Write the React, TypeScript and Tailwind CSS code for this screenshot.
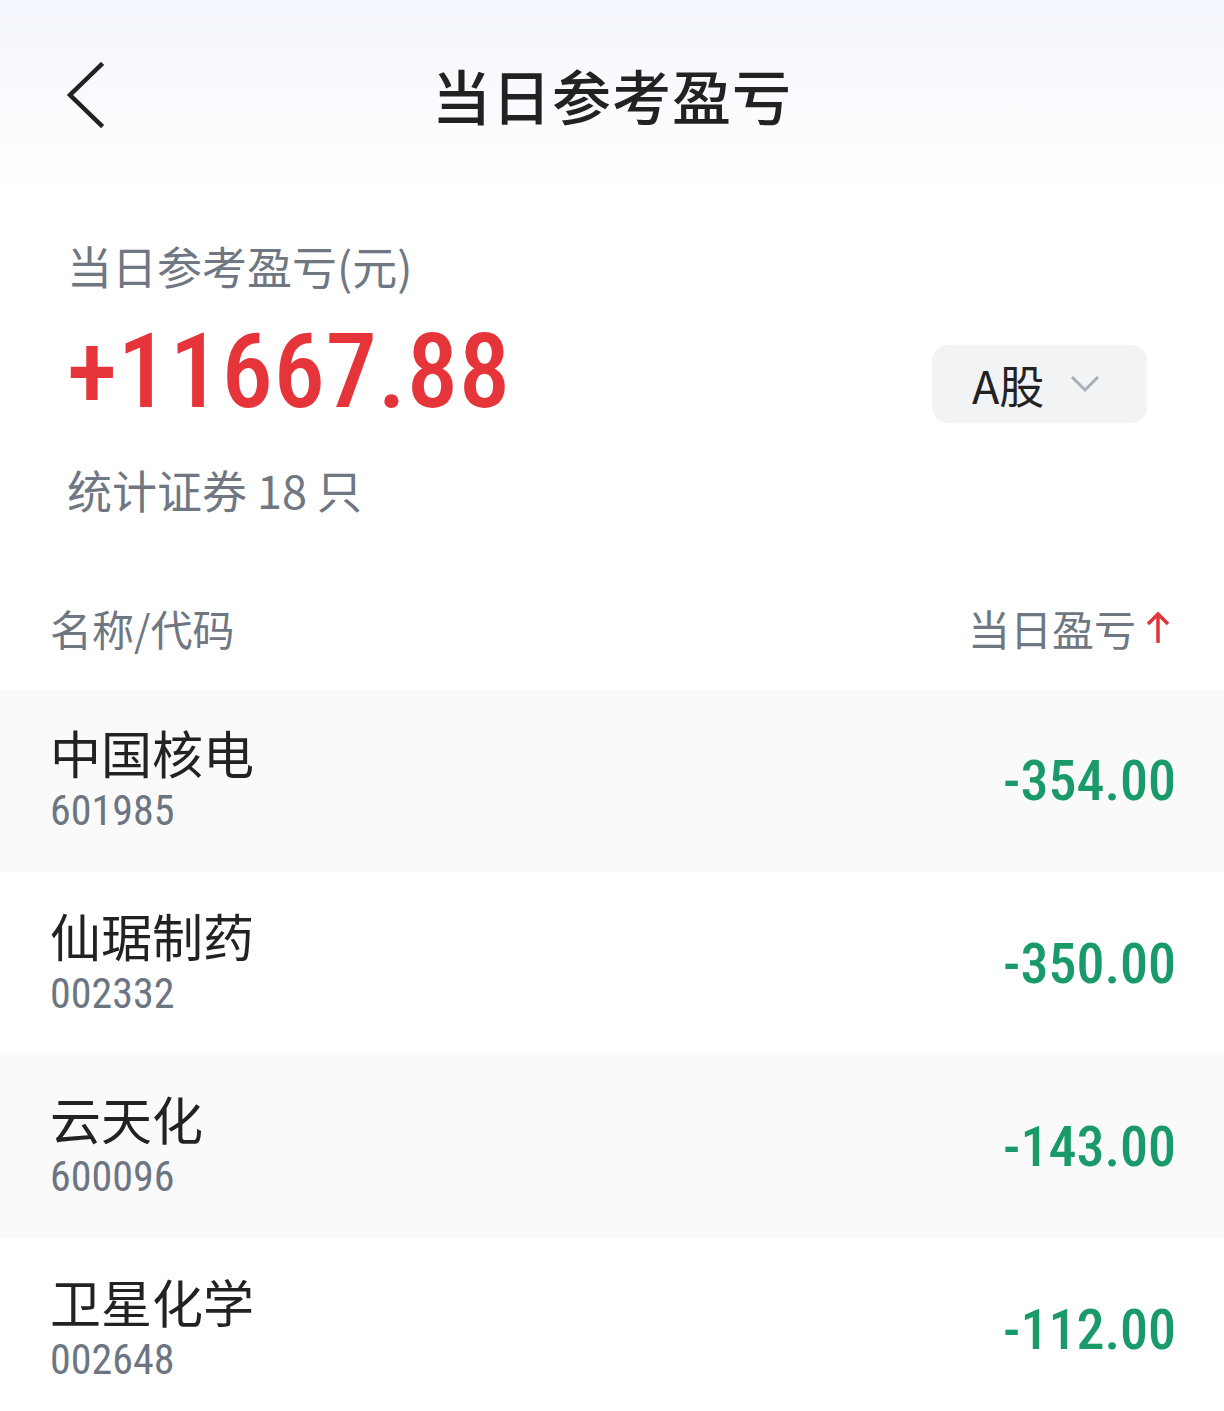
const cjk = { fontFamily: '"Noto Sans CJK SC", "Noto Sans", sans-serif' }
const num = { fontFamily: '"Roboto Condensed", "DejaVu Sans Condensed", Roboto, "Noto Sans CJK SC", sans-serif' }

const rows = [
  { name: "中国核电", code: "601985", pnl: "-354.00" },
  { name: "仙琚制药", code: "002332", pnl: "-350.00" },
  { name: "云天化", code: "600096", pnl: "-143.00" },
  { name: "卫星化学", code: "002648", pnl: "-112.00" },
]

function BackIcon() {
  return (
    <svg width="40" height="66" viewBox="0 0 40 66" fill="none">
      <path d="M35 3 L4 33 L35 63" stroke="#222" strokeWidth="4.5" strokeLinecap="square" />
    </svg>
  )
}

function ChevronDown() {
  return (
    <svg width="30" height="20" viewBox="0 0 30 20" fill="none">
      <path d="M2 3 L15 16 L28 3" stroke="#a7afb8" strokeWidth="3" />
    </svg>
  )
}

function SortUp() {
  return (
    <svg width="24" height="34" viewBox="0 0 24 34" fill="none">
      <path d="M12 4 V33 M2 14 L12 4 L22 14" stroke="#e0353a" strokeWidth="3.5" />
    </svg>
  )
}

export default function App() {
  return (
    <div className="w-[1224px] h-[1411px] overflow-hidden bg-white" style={cjk}>
      {/* header */}
      <div className="h-[192px] pb-[4px] bg-gradient-to-b from-[#f3f6fc] to-white grid grid-cols-[1fr_auto_1fr] items-center px-[66px]">
        <div className="flex items-center pt-[2px]">
          <BackIcon />
        </div>
        <h1 className="text-[59px] leading-none font-medium text-[#222] tracking-[1px]">当日参考盈亏</h1>
        <div />
      </div>

      {/* summary */}
      <div className="pl-[67px] pr-[77px] mt-[44px]">
        <div className="text-[45px] leading-[60px] text-[#6f7782]">当日参考盈亏(元)</div>
        <div className="flex items-end justify-between mt-[24px]">
          <div className="text-[103px] leading-none font-medium text-[#e5353a] tracking-[0.5px]" style={num}>
            +11667.88
          </div>
          <button className="w-[215px] h-[78px] rounded-[16px] bg-[#f2f3f5] flex items-center pl-[40px] gap-[26px]">
            <span className="text-[45px] leading-none text-[#222]">A股</span>
            <ChevronDown />
          </button>
        </div>
        <div className="text-[45px] leading-[60px] text-[#6f7782] mt-[37px] whitespace-pre">统计证券 18 只</div>
      </div>

      {/* table header */}
      <div className="mt-[54px] h-[115px] pb-[9px] flex items-center justify-between pl-[50px] pr-[54px]">
        <span className="text-[42px] text-[#6f7782]">名称/代码</span>
        <span className="flex items-center gap-[10px]">
          <span className="text-[42px] text-[#6f7782]">当日盈亏</span>
          <SortUp />
        </span>
      </div>

      {/* rows */}
      {rows.map((r, i) => (
        <div
          key={r.code}
          className={`h-[183px] flex items-center justify-between pl-[50px] pr-[48px] ${i % 2 === 0 ? "bg-[#fafafa]" : "bg-white"}`}
        >
          <div className="flex flex-col">
            <span className="text-[51px] leading-[60px] text-[#222]">{r.name}</span>
            <span className="text-[42px] leading-[58px] text-[#6c7581]" style={num}>
              {r.code}
            </span>
          </div>
          <span className="text-[56px] leading-none font-medium text-[#1b9a69]" style={num}>
            {r.pnl}
          </span>
        </div>
      ))}
    </div>
  )
}
